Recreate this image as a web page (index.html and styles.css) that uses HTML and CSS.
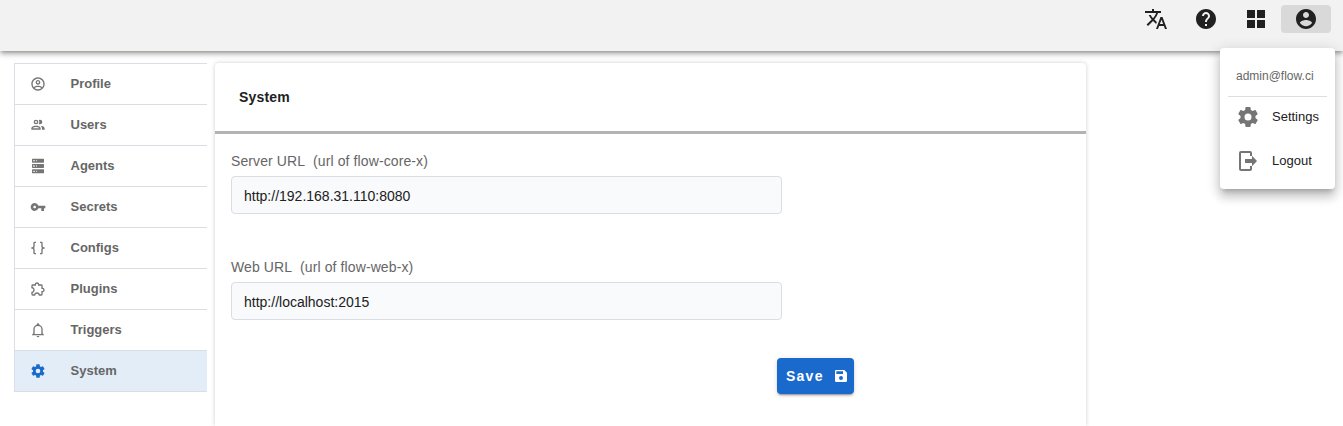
FILE: index.html
```
<!DOCTYPE html>
<html lang="en">
<head>
<meta charset="utf-8">
<title>System settings</title>
<link rel="stylesheet" href="styles.css">
</head>
<body>
<header class="topbar">
  <button class="tool" aria-label="Language"><svg viewBox="0 0 24 24"><path d="M12.87 15.07l-2.54-2.51.03-.03A17.52 17.52 0 0 0 14.07 6H17V4h-7V2H8v2H1v2h11.17C11.5 7.92 10.44 9.75 9 11.35 8.07 10.32 7.3 9.19 6.69 8h-2c.73 1.63 1.73 3.17 2.98 4.56l-5.09 5.02L4 19l5-5 3.11 3.11.76-2.04zM18.5 10h-2L12 22h2l1.12-3h4.75L21 22h2l-4.5-12zm-2.62 7l1.62-4.33L19.12 17h-3.24z"/></svg></button>
  <button class="tool" aria-label="Help"><svg viewBox="0 0 24 24"><path d="M12 2C6.48 2 2 6.48 2 12s4.48 10 10 10 10-4.48 10-10S17.52 2 12 2zm1 17h-2v-2h2v2zm2.07-7.75l-.9.92C13.45 12.9 13 13.5 13 15h-2v-.5c0-1.1.45-2.1 1.17-2.83l1.24-1.26c.37-.36.59-.86.59-1.41 0-1.1-.9-2-2-2s-2 .9-2 2H8c0-2.21 1.79-4 4-4s4 1.79 4 4c0 .88-.36 1.68-.93 2.25z"/></svg></button>
  <button class="tool" aria-label="Apps"><svg viewBox="0 0 24 24"><path d="M3 11h8V3H3zM3 21h8v-8H3zM13 21h8v-8h-8zM13 3v8h8V3z"/></svg></button>
  <button class="tool tool-active" aria-label="Account"><svg viewBox="0 0 24 24"><path d="M12 2C6.48 2 2 6.48 2 12s4.48 10 10 10 10-4.48 10-10S17.52 2 12 2zm0 3c1.66 0 3 1.34 3 3s-1.34 3-3 3-3-1.34-3-3 1.34-3 3-3zm0 14.2c-2.5 0-4.71-1.28-6-3.22.03-1.99 4-3.08 6-3.08 1.99 0 5.97 1.09 6 3.08-1.29 1.94-3.5 3.22-6 3.22z"/></svg></button>
  <div class="menu">
    <div class="menu-user">admin@flow.ci</div>
    <div class="menu-item"><svg viewBox="0 0 24 24"><path d="M12 15.5A3.5 3.5 0 0 1 8.5 12 3.5 3.5 0 0 1 12 8.5a3.5 3.5 0 0 1 3.5 3.5 3.5 3.5 0 0 1-3.5 3.5m7.43-2.53c.04-.32.07-.64.07-.97s-.03-.66-.07-1l2.11-1.63c.19-.15.24-.42.12-.64l-2-3.46c-.12-.22-.39-.31-.61-.22l-2.49 1c-.52-.39-1.06-.73-1.69-.98l-.37-2.65A.506.506 0 0 0 14 2h-4c-.25 0-.46.18-.5.42l-.37 2.65c-.63.25-1.17.59-1.69.98l-2.49-1c-.22-.09-.49 0-.61.22l-2 3.46c-.13.22-.07.49.12.64L4.57 11c-.04.34-.07.67-.07 1s.03.65.07.97l-2.11 1.66c-.19.15-.25.42-.12.64l2 3.46c.12.22.39.3.61.22l2.49-1.01c.52.4 1.06.74 1.69.99l.37 2.65c.04.24.25.42.5.42h4c.25 0 .46-.18.5-.42l.37-2.65c.63-.26 1.17-.59 1.69-.99l2.49 1.01c.22.08.49 0 .61-.22l2-3.46c.12-.22.07-.49-.12-.64z"/></svg><span>Settings</span></div>
    <div class="menu-item"><svg viewBox="0 0 24 24"><path d="M5 2h9a2 2 0 0 1 2 2v3h-2V4H5v16h9v-3h2v3a2 2 0 0 1-2 2H5a2 2 0 0 1-2-2V4a2 2 0 0 1 2-2zM16 6.8l5 5.2-5 5.2V14H9v-4h7z"/></svg><span>Logout</span></div>
  </div>
</header>
<main class="content">
  <nav class="nav">
    <a class="nav-item"><svg viewBox="0 0 24 24"><path d="M12 2C6.48 2 2 6.48 2 12s4.48 10 10 10 10-4.48 10-10S17.52 2 12 2zM7.07 18.28c.43-.9 3.05-1.78 4.93-1.78s4.51.88 4.93 1.78C15.57 19.36 13.86 20 12 20s-3.57-.64-4.93-1.72zm11.29-1.45c-1.43-1.74-4.9-2.33-6.36-2.33s-4.93.59-6.36 2.33A7.95 7.95 0 0 1 4 12c0-4.41 3.59-8 8-8s8 3.59 8 8c0 1.82-.62 3.49-1.64 4.83zM12 6c-1.94 0-3.5 1.56-3.5 3.5S10.06 13 12 13s3.5-1.56 3.5-3.5S13.94 6 12 6zm0 5c-.83 0-1.5-.67-1.5-1.5S11.17 8 12 8s1.5.67 1.5 1.5S12.83 11 12 11z"/></svg><span>Profile</span></a>
    <a class="nav-item"><svg viewBox="0 0 24 24"><path d="M13.07 10.41a5 5 0 0 0 0-5.82A3.39 3.39 0 0 1 15 4a3.5 3.5 0 0 1 0 7 3.39 3.39 0 0 1-1.93-.59M5.5 7.5A3.5 3.5 0 1 1 9 11a3.5 3.5 0 0 1-3.5-3.5m2 0A1.5 1.5 0 1 0 9 6a1.5 1.5 0 0 0-1.5 1.5M16 17v2H2v-2s0-4 7-4 7 4 7 4m-2 0c-.14-.78-1.33-2-5-2s-4.93 1.31-5 2m11.95-4A5.32 5.32 0 0 1 18 17v2h4v-2s0-3.63-6.06-4z"/></svg><span>Users</span></a>
    <a class="nav-item"><svg viewBox="0 0 24 24"><path d="M4 1h16a1 1 0 0 1 1 1v4a1 1 0 0 1-1 1H4a1 1 0 0 1-1-1V2a1 1 0 0 1 1-1m0 8h16a1 1 0 0 1 1 1v4a1 1 0 0 1-1 1H4a1 1 0 0 1-1-1v-4a1 1 0 0 1 1-1m0 8h16a1 1 0 0 1 1 1v4a1 1 0 0 1-1 1H4a1 1 0 0 1-1-1v-4a1 1 0 0 1 1-1M9 5h1V3H9v2m0 8h1v-2H9v2m0 8h1v-2H9v2M5 3v2h2V3H5m0 8v2h2v-2H5m0 8v2h2v-2H5z"/></svg><span>Agents</span></a>
    <a class="nav-item"><svg viewBox="0 0 24 24"><path d="M12.65 10A5.99 5.99 0 0 0 7 6c-3.31 0-6 2.69-6 6s2.69 6 6 6a5.99 5.99 0 0 0 5.65-4H17v4h4v-4h2v-4H12.65zM7 14c-1.1 0-2-.9-2-2s.9-2 2-2 2 .9 2 2-.9 2-2 2z"/></svg><span>Secrets</span></a>
    <a class="nav-item"><svg viewBox="0 0 24 24"><path d="M7 2.5a2 2 0 0 0-2 2V9a2 2 0 0 1-2 2H2v2h1a2 2 0 0 1 2 2v4.500a2 2 0 0 0 2 2h2v-2H7V14a2 2 0 0 0-2-2 2 2 0 0 0 2-2V4.500h2v-2M17 2.500a2 2 0 0 1 2 2V9a2 2 0 0 0 2 2h1v2h-1a2 2 0 0 0-2 2v4.500a2 2 0 0 1-2 2h-2v-2h2V14a2 2 0 0 1 2-2 2 2 0 0 1-2-2V4.500h-2v-2z"/></svg><span>Configs</span></a>
    <a class="nav-item"><svg viewBox="0 0 24 24"><path d="M22 13.500C22 15.260 20.700 16.720 19 16.960V20A2 2 0 0 1 17 22H13.200V21.700A2.700 2.700 0 0 0 10.500 19C9 19 7.800 20.210 7.800 21.700V22H4A2 2 0 0 1 2 20V16.200H2.300C3.790 16.200 5 15 5 13.500S3.790 10.800 2.300 10.800H2V7A2 2 0 0 1 4 5H7.040C7.280 3.300 8.740 2 10.500 2S13.720 3.300 13.960 5H17A2 2 0 0 1 19 7V10.040C20.700 10.280 22 11.740 22 13.500M17 15H18.500A1.500 1.500 0 0 0 18.500 12H17V7H12V5.500A1.500 1.500 0 0 0 9 5.500V7H4V9.120C5.760 9.800 7 11.500 7 13.500S5.750 17.200 4 17.880V20H6.120C6.800 18.250 8.500 17 10.500 17S14.200 18.250 14.880 20H17V15Z"/></svg><span>Plugins</span></a>
    <a class="nav-item"><svg viewBox="0 0 24 24"><path d="M10 21h4a2 2 0 0 1-4 0m11-2v1H3v-1l2-2v-6c0-3.1 2.03-5.83 5-6.710V4a2 2 0 0 1 4 0v.29c2.97.88 5 3.61 5 6.710v6l2 2m-4-8a5 5 0 0 0-10 0v7h10v-7z"/></svg><span>Triggers</span></a>
    <a class="nav-item nav-active"><svg viewBox="0 0 24 24"><path d="M12 15.5A3.5 3.5 0 0 1 8.5 12 3.5 3.5 0 0 1 12 8.5a3.5 3.5 0 0 1 3.5 3.5 3.5 3.5 0 0 1-3.5 3.5m7.43-2.53c.04-.32.07-.64.07-.97s-.03-.66-.07-1l2.11-1.63c.19-.15.24-.42.12-.64l-2-3.46c-.12-.22-.39-.31-.61-.22l-2.49 1c-.52-.39-1.06-.73-1.69-.98l-.37-2.65A.506.506 0 0 0 14 2h-4c-.25 0-.46.18-.5.42l-.37 2.65c-.63.25-1.17.59-1.69.98l-2.49-1c-.22-.09-.49 0-.61.22l-2 3.46c-.13.22-.07.49.12.64L4.57 11c-.04.34-.07.67-.07 1s.03.65.07.97l-2.11 1.66c-.19.15-.25.42-.12.64l2 3.46c.12.22.39.3.61.22l2.49-1.01c.52.4 1.06.74 1.69.99l.37 2.65c.04.24.25.42.5.42h4c.25 0 .46-.18.5-.42l.37-2.65c.63-.26 1.17-.59 1.69-.99l2.49 1.01c.22.08.49 0 .61-.22l2-3.46c.12-.22.07-.49-.12-.64z"/></svg><span>System</span></a>
  </nav>
  <section class="card">
    <h1 class="card-title">System</h1>
    <form class="form">
      <label class="label" for="server">Server URL&nbsp; (url of flow-core-x)</label>
      <input class="field" id="server" value="http://192.168.31.110:8080">
      <label class="label" for="web">Web URL&nbsp; (url of flow-web-x)</label>
      <input class="field" id="web" value="http://localhost:2015">
      <button class="save" type="button"><span>Save</span><svg viewBox="0 0 24 24"><path fill-rule="evenodd" d="M5 3h12l4 4v12a2 2 0 0 1-2 2H5a2 2 0 0 1-2-2V5a2 2 0 0 1 2-2zm0 2v4h10V5zm7 7a3 3 0 1 0 0 6 3 3 0 0 0 0-6z"/></svg></button>
    </form>
  </section>
</main>
</body>
</html>
```
FILE: styles.css
```
* { box-sizing: border-box; }
body {
  margin: 0;
  height: 426px;
  overflow: hidden;
  background: #fff;
  color: #212121;
  font-family: "Liberation Sans", Arial, sans-serif;
}
svg { display: block; flex: none; fill: currentColor; }
button { border: 0; padding: 0; font: inherit; color: inherit; }

.topbar {
  position: relative;
  z-index: 1;
  display: flex;
  justify-content: flex-end;
  align-items: flex-start;
  height: 51px;
  padding: 5px 12px 0;
  background: #f2f2f2;
  box-shadow: 0 2px 4px -1px rgba(0,0,0,.3), 0 4px 5px rgba(0,0,0,.14), 0 1px 8px rgba(0,0,0,.12);
}
.tool {
  display: flex;
  align-items: center;
  justify-content: center;
  width: 50px;
  height: 28px;
  border-radius: 4px;
  background: transparent;
}
.tool svg { width: 24px; height: 24px; }
.tool-active { background: #d9d9d9; }

.menu {
  position: absolute;
  top: 48px;
  right: 8px;
  width: 115px;
  height: 141px;
  padding: 8px;
  border-radius: 4px;
  background: #fff;
  box-shadow: 0 5px 5px -3px rgba(0,0,0,.2), 0 8px 10px 1px rgba(0,0,0,.14), 0 3px 14px 2px rgba(0,0,0,.12);
  font-size: 13px;
}
.menu-user {
  height: 41px;
  padding-left: 8px;
  border-bottom: 1px solid #dedede;
  color: #666;
  font-size: 12px;
  line-height: 40px;
}
.menu-item { display: flex; align-items: center; gap: 12px; height: 40px; padding-left: 8px; }
.menu-item + .menu-item { margin-top: 4px; }
.menu-item svg { width: 24px; height: 24px; color: #757575; }
.menu-item span { padding-bottom: 2px; }

.content { display: flex; gap: 8px; padding: 12px 0 0 14px; }
.nav { width: 193px; border: solid #dadee5; border-width: 1px 0 0 1px; align-self: flex-start; }
.nav-item {
  display: flex;
  align-items: center;
  gap: 25px;
  height: 41px;
  padding-left: 15px;
  border-bottom: 1px solid #dadde3;
  color: #666;
  font-size: 13px;
  font-weight: 700;
}
.nav-item svg { width: 16px; height: 16px; color: #757575; }
.nav-item span { padding-bottom: 2px; margin-left: -.5px; }
.nav-item.nav-active { background: #e3edf8; }
.nav-item.nav-active svg { color: #1a69cc; }

.card {
  width: 871px;
  height: 363px;
  border-radius: 4px 4px 0 0;
  background: #fff;
  box-shadow: 0 0 4px rgba(0,0,0,.2);
}
.card-title {
  height: 71px;
  margin: 0;
  padding-left: 24px;
  border-bottom: 3px solid #b3b3b3;
  font-size: 14px;
  line-height: 68px;
  letter-spacing: .2px;
}
.form { display: flex; flex-direction: column; align-items: flex-start; padding: 17px 16px 0; }
.label { height: 25px; color: #666; font-size: 14px; line-height: 20px; letter-spacing: .1px; }
.field {
  width: 551px;
  height: 38px;
  margin-bottom: 43px;
  padding: 2px 12px 0;
  border: 1px solid #dadde3;
  border-radius: 4px;
  background: #f8fafc;
  color: #212121;
  font: 14px "Liberation Sans", Arial, sans-serif;
}
.save {
  display: flex;
  align-items: center;
  gap: 9px;
  width: 77px;
  height: 36px;
  margin: -5px 0 0 546px;
  padding-left: 9px;
  border-radius: 4px;
  background: #1a69cc;
  color: #fff;
  font-size: 14px;
  font-weight: 700;
  letter-spacing: 1.25px;
  box-shadow: 0 3px 1px -2px rgba(0,0,0,.2), 0 2px 2px rgba(0,0,0,.14), 0 1px 5px rgba(0,0,0,.12);
}
.save svg { width: 16px; height: 16px; }
```
